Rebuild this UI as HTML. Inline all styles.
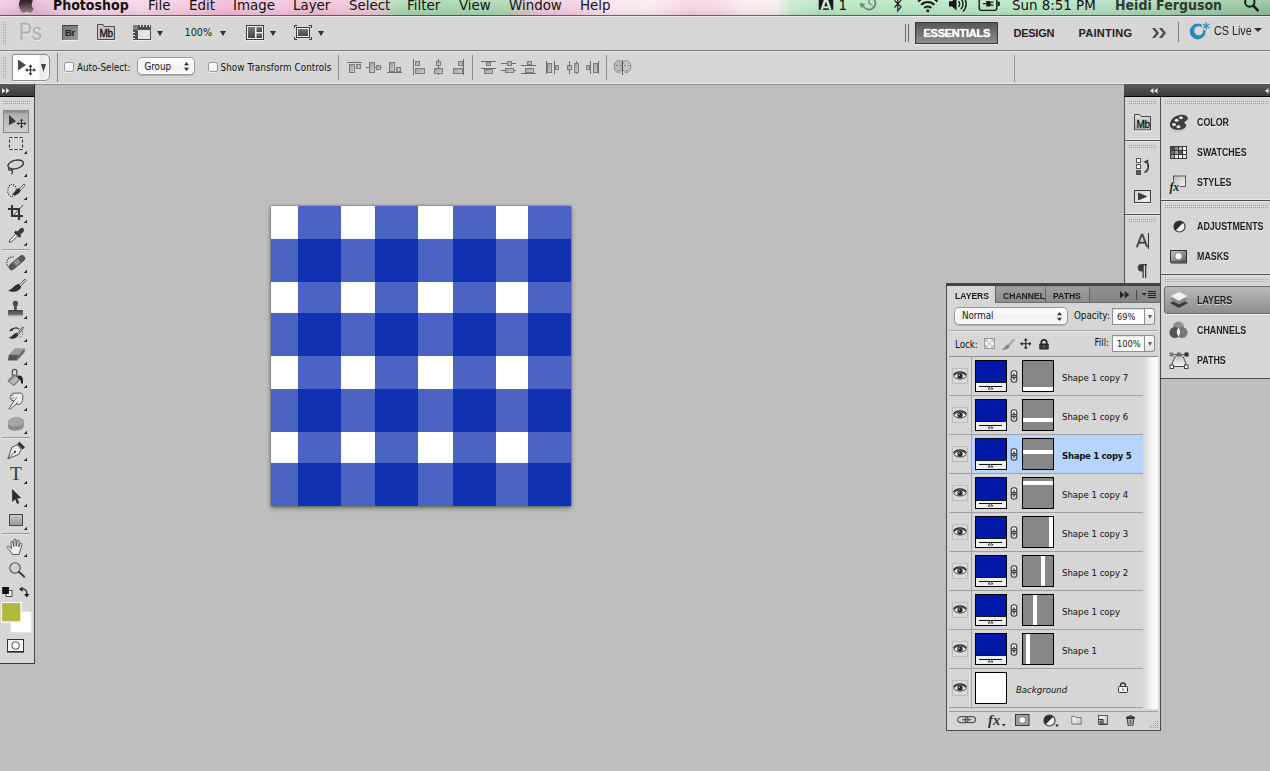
<!DOCTYPE html>
<html lang="en">
<head>
<meta charset="utf-8">
<title>Photoshop</title>
<style>
*{box-sizing:border-box;margin:0;padding:0}
html,body{width:1270px;height:771px;overflow:hidden;background:#bebebe}
body{position:relative;font-family:"Liberation Sans","DejaVu Sans",sans-serif;color:#111;font-size:10px}
.abs{position:absolute}
svg{position:absolute;overflow:visible}
/* ---------- mac menu bar ---------- */
#menubar{position:absolute;left:0;top:0;width:1270px;height:16px;overflow:hidden;
 background:linear-gradient(to right,#edcbdd 0,#e9c2d7 12px,#e1b1cb 30px,#e9c0d6 48px,#f3d3e3 72px,#f5d3e5 140px,#f3c6dc 190px,#f0b8d3 226px,#f4c9de 262px,#f0bcd5 300px,#f1c3d9 345px,#ecc7d6 378px,#bcd5b8 392px,#a6d6ae 404px,#a5d6ad 480px,#abd5b0 508px,#d4c7c5 524px,#efc5d9 540px,#f4cfe2 575px,#f9e4ee 610px,#fae9f1 650px,#f6d1e3 690px,#f7d5e5 715px,#fae8f0 745px,#f6eeea 776px,#c8e9cf 792px,#b7e6c2 815px,#b5e4c0 1000px,#afddba 1120px,#9dcba8 1210px,#90c09c 1270px);
 border-bottom:1px solid rgba(40,10,25,.62)}
#menubar:after{content:"";position:absolute;left:0;right:0;top:0;height:15px;background:linear-gradient(to bottom,rgba(255,255,255,.2),rgba(255,255,255,.04) 45%,rgba(0,0,0,.02) 70%,rgba(0,0,0,.07))}
#menubar span{position:absolute;top:-4px;font-family:"DejaVu Sans","Liberation Sans",sans-serif;font-size:13.4px;line-height:20px;color:#111;white-space:nowrap;z-index:2}
#menubar span.b{top:-5px;font-weight:bold;font-family:"DejaVu Sans Condensed","DejaVu Sans","Liberation Sans",sans-serif;font-size:14px}
/* ---------- application bar ---------- */
#appbar{position:absolute;left:0;top:16px;width:1270px;height:34px;background:#d6d6d6;box-shadow:inset 0 1px 0 #ebebeb}
#optbar{position:absolute;left:0;top:50px;width:1270px;height:35px;background:#d6d6d6;border-top:1px solid #7d7d7d;border-bottom:1px solid #8e8e8e;box-shadow:inset 0 -1px 0 #e9e9e9,inset 0 1px 0 #e4e4e4}
.lbl{position:absolute;white-space:nowrap;font-size:10px;line-height:12px;color:#111}
.ws{position:absolute;white-space:nowrap;font-weight:bold;font-size:11px;line-height:14px;color:#222;letter-spacing:-.25px}
.dj{font-family:"DejaVu Sans Condensed","DejaVu Sans","Liberation Sans",sans-serif;font-size:9.700px}
.pslogo{font-size:23px;line-height:26px;color:#b4b4b4;-webkit-text-stroke:.5px #b0b0b0;letter-spacing:-.3px;text-shadow:.7px 1px 0 #f4f4f4;transform:scaleX(.86);transform-origin:0 0}
.tri{position:absolute;display:block;width:0;height:0;border-style:solid;border-color:#2e2e2e transparent transparent transparent;border-width:5px 3.500px 0 3.500px}
.cb{position:absolute;width:10px;height:10px;background:linear-gradient(to bottom,#fff,#f1f1f1);border:1px solid #9b9b9b;border-radius:2px;box-shadow:0 1px 0 rgba(255,255,255,.6)}
.grip.v{}
.tab{position:absolute;white-space:nowrap;font-weight:bold;font-size:9.900px;line-height:12px;margin-top:.5px;color:#1c1c1c;transform:scaleX(.87);transform-origin:0 0}
.fld{position:absolute;width:33px;height:17px;background:#fff;border:1px solid #8f8f8f;box-shadow:inset 0 1px 1px rgba(0,0,0,.12)}
.fbtn{position:absolute;width:10px;height:17px;background:linear-gradient(to bottom,#fdfdfd,#e4e4e4);border:1px solid #8f8f8f;border-left:0;border-radius:0 3px 3px 0}
.fbtn:after{content:"";position:absolute;left:2.500px;top:6px;border-style:solid;border-width:4.500px 2.200px 0 2.200px;border-color:#5a5a5a transparent transparent transparent}
.lrow{position:absolute;left:3px;width:194px;height:39px;border-bottom:1px solid #a0a0a0}
.lrow.sel:before{content:"";position:absolute;left:23px;top:0;right:0;height:38px;background:#b5d5ff}
.lrow .th{position:absolute;left:26px;top:3px;width:32px;height:32px;border:1px solid #000;overflow:hidden}
.lrow .th.fill{background:linear-gradient(to bottom,#0018a8 0,#0018a8 21.500px,#1a1a1a 21.500px,#1a1a1a 22.500px,#efefef 22.500px)}
.lrow .th.fill .sl{position:absolute;left:3px;top:25px;width:23px;height:1px;background:#111}
.lrow .th.mask{left:73px;background:#868686}
.lrow .th.mask i{position:absolute;display:block;background:#fff}
.lrow .ln{position:absolute;left:113px;top:15px;white-space:nowrap;font-family:"DejaVu Sans Condensed","DejaVu Sans","Liberation Sans",sans-serif;font-size:9.500px;line-height:12px;color:#111}
.lrow.sel .ln{font-weight:bold;letter-spacing:-.28px}
.hline{height:2px;border-top:1px solid #4c4c4c;border-bottom:1px solid #e6e6e6;box-shadow:0 -1px 0 #e9e9e9}
.pl{position:absolute;left:73px;margin-top:.5px;white-space:nowrap;font-weight:bold;font-size:10.200px;line-height:12px;color:#1c1c1c;transform:scaleX(.87);transform-origin:0 0;text-shadow:0 1px 0 rgba(255,255,255,.55)}
/* ---------- canvas ---------- */
#doc{position:absolute;left:271px;top:206px;width:300px;height:300px;background:#fff;box-shadow:0 2px 5px rgba(0,0,0,.42),0 0 2px rgba(0,0,0,.45)}
#doc i{position:absolute;background:#4b63c3;display:block}
#doc b{position:absolute;width:43px;height:43px;background:#1032b1;display:block}
/* ---------- panels ---------- */
.grip{position:absolute;height:4px;background:conic-gradient(from 270deg,#a2a2a2 25%,rgba(0,0,0,0) 0) 0 0/2px 2px}
.dockhead{position:absolute;height:12px;background:linear-gradient(to bottom,#5a5a5a,#3c3c3c)}
</style>
</head>
<body>

<!-- MENU BAR -->
<div id="menubar">
<svg style="left:0;top:0;z-index:2" width="1270" height="15" viewBox="0 0 1270 15">
 <defs><linearGradient id="apg" x1="0" y1="0" x2="0" y2="1"><stop offset="0" stop-color="#2c1820"/><stop offset=".35" stop-color="#4a343c"/><stop offset="1" stop-color="#96848c"/></linearGradient></defs>
 <path d="M20.800 -1C19.300 1 18.600 3.500 18.900 5.500 19.300 8.500 20.800 11.500 22.400 12.600 23.300 13.200 24.300 13.100 25.200 12.700 26.300 12.200 27.500 12.200 28.600 12.700 29.600 13.200 30.600 13.100 31.400 12.300 32.500 11.200 33.300 9.800 33.800 8.600 32.400 8 31.600 6.600 31.700 5 31.800 3 32.500 1 33.200 -1Z" fill="url(#apg)"/>
 <path d="M23.500 13.600c1-.5 2-.5 3.400-1.100 1.200.5 2.400.7 3.400 1.100" stroke="#fff" stroke-opacity=".55" fill="none"/>
 <!-- adobe -->
 <rect x="818.700" y="-3" width="14.600" height="12.800" fill="#1a1a1a"/>
 <path d="M824.800 -3l-4.300 12.800h2.400L826 1.500l3.100 8.300h2.400L827.200 -3Z" fill="#cfeed8"/>
 <path d="M824.300 6.200h3.400l.8 2h-5Z" fill="#cfeed8"/>
 <!-- time machine -->
 <g stroke="#76867a" fill="none" stroke-width="1.800"><path d="M863 5.500A6.400 6.400 0 1 0 864.500 -1.500"/><path d="M869 -2V3.300l3.500 2" stroke-width="1.300"/></g>
 <path d="M859.300 3l6 .7-3.900 4.500Z" fill="#76867a"/>
 <!-- bluetooth -->
 <path d="M894.500 .3L901 6.800 897.800 10.800V-4L901 .3 894.500 7.500" fill="none" stroke="#1e1e1e" stroke-width="1.200"/>
 <!-- wifi -->
 <g fill="none" stroke="#161616" stroke-width="2"><path d="M918.200 1.600A13.300 13.300 0 0 1 937.400 1.600"/><path d="M921.200 4.900A9 9 0 0 1 934.400 4.900"/><path d="M924.300 8A4.800 4.800 0 0 1 931.300 8"/></g><circle cx="927.800" cy="10.700" r="1.500" fill="#161616"/>
 <!-- volume -->
 <path d="M949 1.300h3l4.500-4V10.500l-4.500-4h-3Z" fill="#161616"/>
 <g fill="none" stroke="#161616" stroke-width="1.400"><path d="M958.500 1.200a4 4 0 0 1 0 5.600"/><path d="M960.700 -1.300a7.300 7.300 0 0 1 0 10.600"/><path d="M963 -3.500a10.500 10.500 0 0 1 0 15"/></g>
 <!-- battery -->
 <rect x="979.200" y="-3" width="17.600" height="13.400" rx="2.300" fill="none" stroke="#1c1c1c" stroke-width="1.400"/><path d="M997.500 1.500h1.300a1 1 0 0 1 1 1v2.500a1 1 0 0 1-1 1h-1.300Z" fill="#1c1c1c"/>
 <path d="M983 3.700h3.500M990.500 2.200h3M990.500 5.200h3" stroke="#1c1c1c" stroke-width="1.200"/><path d="M986.300 1h3a1.500 1.500 0 0 1 1.500 1.500v2.400a1.500 1.500 0 0 1-1.500 1.500h-3Z" fill="#1c1c1c"/>
 <!-- spotlight -->
 <circle cx="1249.800" cy="2" r="4.700" fill="none" stroke="#1a1a1a" stroke-width="1.900"/><path d="M1253.200 5.600l4.600 4.800" stroke="#1a1a1a" stroke-width="2.400" stroke-linecap="round"/>
</svg>
 <span class="b" style="left:53px">Photoshop</span>
 <span style="left:148px">File</span>
 <span style="left:189px">Edit</span>
 <span style="left:233px">Image</span>
 <span style="left:293px">Layer</span>
 <span style="left:349px">Select</span>
 <span style="left:407px">Filter</span>
 <span style="left:459px">View</span>
 <span style="left:509px">Window</span>
 <span style="left:580px">Help</span>
 <span style="left:838.500px">1</span>
 <span style="left:1012px">Sun 8:51 PM</span>
 <span class="b" style="left:1115px;color:#303a33">Heidi Ferguson</span>
</div>

<!-- APPLICATION BAR -->
<div id="appbar">
 <div class="grip v" style="left:3px;top:6px;width:4px;height:24px"></div>
 <span class="abs pslogo" style="left:19px;top:3px">Ps</span>
 <!-- Br -->
 <div class="abs" style="left:62px;top:9px;width:16px;height:15px;background:linear-gradient(135deg,#747474,#9a9a9a);border-top:1px solid #3e3e3e;border-left:1px solid #5a5a5a;box-shadow:0 1px 0 #efefef"></div>
 <span class="abs" style="left:65px;top:11px;font-weight:bold;font-size:9.5px;line-height:11px;color:#222;letter-spacing:-.3px">Br</span>
 <!-- Mb -->
 <svg style="left:97px;top:8px" width="19" height="17" viewBox="0 0 19 17"><path d="M.5 15.5V.5H6l1 2H17.5V15.5Z" fill="#c6c6c6" stroke="#4a4a4a"/><path d="M0 16.5H18" stroke="#efefef"/></svg>
 <span class="abs" style="left:99.5px;top:12px;font-size:10px;line-height:11px;color:#111;letter-spacing:-.3px;-webkit-text-stroke:.3px #111">Mb</span>
 <!-- view extras -->
 <svg style="left:133px;top:9px" width="18" height="16" viewBox="0 0 18 16"><rect x="0" y="0" width="18" height="15" fill="#4e4e4e"/><rect x="5" y="5" width="12" height="9" fill="#e4e4e4"/><rect x="0" y="0" width="5" height="5" fill="#7c7c7c"/><path d="M7.5 0v2M10.5 0v2M13.5 0v2M16.5 0v2M0 7.500h2M0 10.500h2M0 13.500h2" stroke="#e8e8e8"/><path d="M0 15.500H18" stroke="#efefef"/></svg>
 <i class="tri" style="left:157px;top:15px"></i>
 <span class="lbl dj" style="left:184.500px;top:10px;font-size:10.800px;line-height:14px;color:#1a1a1a">100%</span>
 <i class="tri" style="left:220px;top:15px"></i>
 <!-- arrange -->
 <svg style="left:246px;top:9px" width="18" height="16" viewBox="0 0 18 16"><defs><linearGradient id="gd" x1="0" y1="0" x2="0" y2="1"><stop offset="0" stop-color="#777"/><stop offset="1" stop-color="#444"/></linearGradient></defs><rect x=".5" y=".5" width="17" height="14" fill="#f4f4f4" stroke="#3c3c3c"/><rect x="2" y="2" width="7" height="11" fill="url(#gd)"/><rect x="10.500" y="2" width="5.500" height="5" fill="url(#gd)"/><rect x="10.500" y="8.300" width="5.500" height="4.700" fill="url(#gd)"/><path d="M0 15.500H18" stroke="#efefef"/></svg>
 <i class="tri" style="left:270px;top:15px"></i>
 <!-- screen mode -->
 <svg style="left:294px;top:9px" width="18" height="16" viewBox="0 0 18 16"><path d="M.5 3V.5H3M15 .5h2.500V3M17.500 12v2.500H15M3 14.500H.5V12" fill="none" stroke="#333"/><rect x="2.500" y="2.500" width="13" height="10" fill="#f0f0f0" stroke="#3c3c3c"/><rect x="4" y="4" width="10" height="7" fill="url(#gd)"/></svg>
 <i class="tri" style="left:318px;top:15px"></i>

 <div class="abs" style="left:905px;top:8px;width:4px;height:18px;border-left:1px solid #6a6a6a;border-right:1px solid #6a6a6a"></div>
 <div class="abs" style="left:915px;top:6px;width:83px;height:22px;background:linear-gradient(to bottom,#575757,#8e8e8e);border:1px solid #3a3a3a;box-shadow:0 1px 0 #ececec"></div>
 <span class="ws" style="left:923.500px;top:10px;color:#fff;text-shadow:0 0 1px #fff">ESSENTIALS</span>
 <span class="ws" style="left:1013.500px;top:10px">DESIGN</span>
 <span class="ws" style="left:1078.500px;top:10px;letter-spacing:.25px">PAINTING</span>
 <svg style="left:1152px;top:12px" width="14" height="10" viewBox="0 0 14 10"><path d="M0 0h3l4 5-4 5H0l4-5ZM7 0h3l4 5-4 5H7l4-5Z" fill="#4c4c4c"/></svg>
 <div class="abs" style="left:1178px;top:6px;width:1px;height:20px;background:#7a7a7a"></div>
 <!-- CS Live -->
 <svg style="left:1189px;top:5px" width="22" height="19" viewBox="0 0 22 19"><circle cx="8.700" cy="10.500" r="7.900" fill="#2a8cb6"/><circle cx="9.700" cy="9.700" r="4.500" fill="#d9d9d9"/><circle cx="17.200" cy="5" r="4.600" fill="#d6d6d6"/><path d="M17.200 1.200v7.600M13.900 3.100l6.600 3.800M13.900 6.900l6.600-3.800" stroke="#2a8cb6" stroke-width="1.200"/></svg>
 <span class="lbl" style="left:1214px;top:8px;font-size:12.500px;line-height:14px;transform:scaleX(.86);transform-origin:0 0;color:#222">CS Live</span>
 <i class="tri" style="left:1254px;top:12px;border-width:4.500px 4px 0 4px"></i>
</div>

<!-- OPTIONS BAR -->
<div id="optbar">
 <div class="grip v" style="left:3px;top:6px;width:4px;height:22px"></div>
 <div class="abs" style="left:12px;top:3px;width:38px;height:27px;border:1px solid #8c8c8c;border-radius:1px 5px 5px 1px;background:linear-gradient(to right,#fff 0,#fff 26px,#e9e9e9 27px,#f2f2f2 36px);box-shadow:0 1px 0 #eee"></div>
 <svg style="left:17px;top:8px" width="19" height="17" viewBox="0 0 19 17"><path d="M1 .5V11.500L9 6Z" fill="#4a4a4a"/><path d="M13.500 6.500v9M9 11h9" stroke="#333" stroke-width="1.200"/><path d="M13.500 5.500l2 2.500h-4ZM13.500 16.500l2-2.500h-4ZM8 11l2.500-2v4ZM19 11l-2.500-2v4Z" fill="#333"/></svg>
 <svg style="left:41px;top:13px" width="5" height="8" viewBox="0 0 5 8"><path d="M0 0H5L2.500 8Z" fill="#444"/></svg>
 <div class="abs" style="left:57px;top:2px;width:1px;height:29px;background:#858585"></div>
 <div class="cb" style="left:64px;top:11px"></div>
 <span class="lbl dj" style="left:77px;top:10.500px">Auto-Select:</span>
 <div class="abs" style="left:137px;top:6px;width:58px;height:17.500px;border:1px solid #9a9a9a;border-radius:5px;background:linear-gradient(to bottom,#fff,#f3f3f3 60%,#fbfbfb);box-shadow:0 1px 1px rgba(0,0,0,.18)"></div>
 <span class="lbl dj" style="left:144.500px;top:9.500px">Group</span>
 <svg style="left:184px;top:11px" width="5" height="9" viewBox="0 0 5 9"><path d="M0 3.200L2.500 0 5 3.200ZM0 5.800L2.500 9 5 5.800Z" fill="#333"/></svg>
 <div class="cb" style="left:208px;top:11px"></div>
 <span class="lbl dj" style="left:220.500px;top:10.500px;letter-spacing:.12px">Show Transform Controls</span>
 <div class="abs" style="left:338px;top:4px;width:1px;height:25px;background:#8e8e8e"></div>
 <svg id="alignicons" style="left:0;top:-1px" width="640" height="36" viewBox="0 50 640 36"><defs><linearGradient id="gb" x1="0" y1="0" x2="1" y2="1"><stop offset="0" stop-color="#9a9a9a"/><stop offset="1" stop-color="#d2d2d2"/></linearGradient></defs><path d="M347 62.5H362" stroke="#6e6e6e"/><rect x="349.5" y="64.5" width="5" height="8" fill="url(#gb)" stroke="#7c7c7c"/><rect x="356.5" y="64.5" width="4" height="4" fill="url(#gb)" stroke="#7c7c7c"/><path d="M366 67.5H382" stroke="#6e6e6e"/><rect x="369.5" y="62.5" width="5" height="10" fill="url(#gb)" stroke="#7c7c7c"/><rect x="376.5" y="65.5" width="4" height="4" fill="url(#gb)" stroke="#7c7c7c"/><path d="M387 72.5H402" stroke="#6e6e6e"/><rect x="389.5" y="62.5" width="5" height="9" fill="url(#gb)" stroke="#7c7c7c"/><rect x="396.5" y="67.5" width="4" height="4" fill="url(#gb)" stroke="#7c7c7c"/><path d="M413.5 59V75" stroke="#6e6e6e"/><rect x="415.5" y="61.5" width="4" height="4" fill="url(#gb)" stroke="#7c7c7c"/><rect x="415.5" y="68.5" width="9" height="5" fill="url(#gb)" stroke="#7c7c7c"/><path d="M438.5 59V75" stroke="#6e6e6e"/><rect x="436.5" y="61.5" width="4" height="4" fill="url(#gb)" stroke="#7c7c7c"/><rect x="434.5" y="68.5" width="8" height="5" fill="url(#gb)" stroke="#7c7c7c"/><path d="M463.5 59V75" stroke="#6e6e6e"/><rect x="458.5" y="61.5" width="4" height="4" fill="url(#gb)" stroke="#7c7c7c"/><rect x="453.5" y="68.5" width="9" height="5" fill="url(#gb)" stroke="#7c7c7c"/><path d="M481 61.5H496" stroke="#6e6e6e"/><path d="M481 68.5H496" stroke="#6e6e6e"/><rect x="486.5" y="62.5" width="4" height="3" fill="url(#gb)" stroke="#7c7c7c"/><rect x="484.5" y="69.5" width="8" height="4" fill="url(#gb)" stroke="#7c7c7c"/><path d="M501 63.5H516" stroke="#6e6e6e"/><path d="M501 70.5H516" stroke="#6e6e6e"/><rect x="507.5" y="61.5" width="4" height="4" fill="url(#gb)" stroke="#7c7c7c"/><rect x="505.5" y="68.5" width="8" height="4" fill="url(#gb)" stroke="#7c7c7c"/><path d="M521 65.5H536" stroke="#6e6e6e"/><path d="M521 73.5H536" stroke="#6e6e6e"/><rect x="527.5" y="61.5" width="4" height="3" fill="url(#gb)" stroke="#7c7c7c"/><rect x="525.5" y="68.5" width="8" height="4" fill="url(#gb)" stroke="#7c7c7c"/><path d="M546.5 61V74" stroke="#6e6e6e"/><path d="M554.5 61V74" stroke="#6e6e6e"/><rect x="547.5" y="63.5" width="4" height="9" fill="url(#gb)" stroke="#7c7c7c"/><rect x="555.5" y="65.5" width="3" height="4" fill="url(#gb)" stroke="#7c7c7c"/><path d="M569.5 61V74" stroke="#6e6e6e"/><path d="M576.5 61V74" stroke="#6e6e6e"/><rect x="567.5" y="65.5" width="4" height="4" fill="url(#gb)" stroke="#7c7c7c"/><rect x="574.5" y="63.5" width="4" height="9" fill="url(#gb)" stroke="#7c7c7c"/><path d="M590.5 61V74" stroke="#6e6e6e"/><path d="M598.5 61V74" stroke="#6e6e6e"/><rect x="586.5" y="65.5" width="3" height="4" fill="url(#gb)" stroke="#7c7c7c"/><rect x="593.5" y="63.5" width="4" height="9" fill="url(#gb)" stroke="#7c7c7c"/><ellipse cx="618.500" cy="66.500" rx="4.300" ry="6" fill="#b9b9b9" stroke="#8a8a8a"/><ellipse cx="626.500" cy="66.500" rx="4.300" ry="6" fill="#c4c4c4" stroke="#8a8a8a"/><path d="M622.500 60V75" stroke="#555"/><path d="M616 65.500h2M620 65.500h1.500M624 65.500h2M628 65.500h1.500M618 70.500h1.500M626 70.500h1.500" stroke="#7a7a7a"/></svg>
 <div class="abs" style="left:472px;top:4px;width:1px;height:25px;background:#8e8e8e"></div>
 <div class="abs" style="left:606px;top:4px;width:1px;height:25px;background:#8e8e8e"></div>
 <div class="abs" style="left:1014px;top:4px;width:1px;height:27px;background:#9a9a9a"></div>
</div>

<!-- CANVAS -->
<div id="doc">
 <i style="left:27px;top:0;width:43px;height:300px"></i>
 <i style="left:104px;top:0;width:43px;height:300px"></i>
 <i style="left:182px;top:0;width:43px;height:300px"></i>
 <i style="left:257px;top:0;width:43px;height:300px"></i>
 <i style="left:0;top:33px;width:300px;height:43px"></i>
 <i style="left:0;top:107px;width:300px;height:43px"></i>
 <i style="left:0;top:183px;width:300px;height:43px"></i>
 <i style="left:0;top:257px;width:300px;height:43px"></i>
 <b style="left:27px;top:33px"></b> <b style="left:104px;top:33px"></b> <b style="left:182px;top:33px"></b> <b style="left:257px;top:33px"></b>
 <b style="left:27px;top:107px"></b> <b style="left:104px;top:107px"></b> <b style="left:182px;top:107px"></b> <b style="left:257px;top:107px"></b>
 <b style="left:27px;top:183px"></b> <b style="left:104px;top:183px"></b> <b style="left:182px;top:183px"></b> <b style="left:257px;top:183px"></b>
 <b style="left:27px;top:257px"></b> <b style="left:104px;top:257px"></b> <b style="left:182px;top:257px"></b> <b style="left:257px;top:257px"></b>
</div>

<!-- TOOLBOX -->
<div id="tools" class="abs" style="left:0;top:84px;width:36px;height:580px">
 <div class="abs" style="left:0;top:0;width:35px;height:580px;background:#d6d6d6;border-right:1px solid #4a4a4a;border-bottom:1px solid #3a3a3a"></div>
 <div class="abs" style="left:0;top:0;width:35px;height:13px;background:linear-gradient(to bottom,#5a5a5a,#3c3c3c 91%,#000 92%);border-right:1px solid #2a2a2a"></div>
 <svg style="left:2px;top:4px" width="8" height="6" viewBox="0 0 8 6"><path d="M0 0l3.500 2.700L0 5.400ZM4 0l3.500 2.700L4 5.400Z" fill="#e4e4e4"/></svg>
 <div class="grip" style="left:3px;top:17px;width:28px;height:4px"></div>
 <svg style="left:0;top:0" width="36" height="580" viewBox="0 84 36 580"><defs>
<linearGradient id="tg1" x1="0" y1="0" x2="0" y2="1"><stop offset="0" stop-color="#8a8a8a"/><stop offset=".12" stop-color="#9c9c9c"/><stop offset=".15" stop-color="#adadad"/><stop offset="1" stop-color="#d2d2d2"/></linearGradient>
<linearGradient id="tg2" x1="0" y1="0" x2="0" y2="1"><stop offset="0" stop-color="#c9c9c9"/><stop offset="1" stop-color="#969696"/></linearGradient>
<linearGradient id="tg3" x1="0" y1="0" x2="0" y2="1"><stop offset="0" stop-color="#444"/><stop offset="1" stop-color="#7a7a7a"/></linearGradient>
<linearGradient id="tg4" x1="0" y1="0" x2="1" y2="1"><stop offset="0" stop-color="#505050"/><stop offset=".55" stop-color="#c0c0c0"/><stop offset="1" stop-color="#6a6a6a"/></linearGradient>
<filter id="nz" x="0" y="0" width="1" height="1"><feTurbulence type="fractalNoise" baseFrequency=".8" numOctaves="2" seed="4" result="t"/><feColorMatrix in="t" type="matrix" values="0 0 0 0 .25  0 0 0 0 .25  0 0 0 0 .25  2.500 0 0 0 -.9" result="n"/><feComposite in="n" in2="SourceGraphic" operator="in"/></filter><pattern id="spg" width="3" height="3" patternUnits="userSpaceOnUse"><rect width="3" height="3" fill="#9c9c9c"/><rect x="0" y="0" width="1" height="1" fill="#d6d6d6"/><rect x="2" y="1" width="1" height="1" fill="#6e6e6e"/><rect x="1" y="2" width="1" height="1" fill="#c4c4c4"/></pattern>
</defs><rect x="3.500" y="110.500" width="25" height="22" fill="url(#tg1)" stroke="#868686"/><path d="M9 115V125.300L16 121.300Z" fill="#383838"/><path d="M21.500 119.800v7.400M17.800 123.500h7.400" stroke="#333" stroke-width="1.100"/><path d="M21.500 118.700l1.800 2.100h-3.600ZM21.500 128.300l1.800-2.100h-3.600ZM16.700 123.500l2.100-1.800v3.600ZM26.300 123.500l-2.100-1.800v3.600Z" fill="#333"/><rect x="9.500" y="137.500" width="13" height="12" fill="none" stroke="#2e2e2e" stroke-width="1.100" stroke-dasharray="3 2"/><path d="M27 150.8V154H23.800Z" fill="#1e1e1e"/><ellipse cx="15.700" cy="164.500" rx="7.900" ry="4.200" transform="rotate(-14 15.700 164.500)" fill="none" stroke="#3a3a3a" stroke-width="1.400"/><path d="M9 168.200c-1.500 1.600 1.200 2.600 2.600 1.800 1.200 1 1.300 2.800-.2 4.200" fill="none" stroke="#3a3a3a" stroke-width="1.300"/><path d="M27 173.8V177H23.800Z" fill="#1e1e1e"/><ellipse cx="12.100" cy="190.500" rx="4.300" ry="6.100" fill="none" stroke="#222" stroke-width="1.200" stroke-dasharray="1 1.300"/><path d="M11.300 194.300C13.800 193.800 15.200 190.200 18.600 188L20.900 190.100C19.800 193.800 15.500 196.500 11.300 194.300Z" fill="#303030"/><path d="M19.300 188.600l4.700-4.600 1.300 1.300-4.600 4.700" fill="#e6e6e6" stroke="#4a4a4a" stroke-width=".9"/><path d="M27 196.8V200H23.800Z" fill="#1e1e1e"/><path d="M12 205v11h11M8 209h11v11" fill="none" stroke="#333" stroke-width="2.100"/><path d="M13 216L23 205" stroke="#333" stroke-width=".9"/><path d="M27 219.8V223H23.800Z" fill="#1e1e1e"/><path d="M9.300 242.300l.6-2.300 6-6.300 2 2-6.300 6Z" fill="#f4f4f4" stroke="#3a3a3a" stroke-width=".9"/><path d="M15 231.500l5.300 5.300" stroke="#2a2a2a" stroke-width="2.600"/><path d="M18.600 233.400l3.300-3.300" stroke="#3c3c3c" stroke-width="4.400" stroke-linecap="round"/><path d="M27 242.60000000000002V245.8H23.800Z" fill="#1e1e1e"/><path d="M2 249.500H30" stroke="#9a9a9a"/><path d="M2 250.500H30" stroke="#e6e6e6"/><path d="M13.500 257.300a5.200 5.800 0 0 0-5.300 9.500" fill="none" stroke="#222" stroke-width="1.200" stroke-dasharray="1 1.300"/><rect x="7.400" y="259.700" width="19" height="5.800" rx="2.900" transform="rotate(-40 16.900 262.600)" fill="#585858" stroke="#454545" stroke-width=".6"/><path d="M14.400 264.600l5-4.200" stroke="#828282" stroke-width="4.600"/><path d="M15.500 262l.01 0M17.300 260.500l.01 0M16.700 263.700l.01 0M18.600 262.200l.01 0" stroke="#dedede" stroke-width="1.100" stroke-linecap="round"/><path d="M27 269.8V273H23.800Z" fill="#1e1e1e"/><path d="M7.900 290.600C11.500 290 13.500 285.800 18.600 283.800L21.300 286.400C20 290.800 13.800 293.400 7.900 290.600Z" fill="#303030"/><path d="M19.300 284.700l5.500-5.500 1.300 1.200-5.400 5.700" fill="#dcdcdc" stroke="#444" stroke-width=".9"/><path d="M27 292.8V296H23.800Z" fill="#1e1e1e"/><circle cx="15.400" cy="303.400" r="2.600" fill="#4a4a4a"/><rect x="14" y="304.500" width="2.800" height="6" fill="#4f4f4f"/><rect x="8" y="310" width="15" height="5.500" rx=".8" fill="url(#tg3)"/><path d="M8 316.300H23" stroke="#bdbdbd"/><path d="M27 315.8V319H23.800Z" fill="#1e1e1e"/><path d="M8.300 337.800C11.300 337.300 12.800 334.200 16.300 332.700L18.500 334.800C17.400 338.200 12.800 340 8.300 337.800Z" fill="#303030"/><path d="M17 334l5.600-7.300 1.100.9-5.400 7.500" fill="#dcdcdc" stroke="#444" stroke-width=".9"/><path d="M11.300 330.300c2.300-2.600 5.300-2.900 7.700-1.300" fill="none" stroke="#333" stroke-width="1.400"/><path d="M9 331.500l4-1-1.200-2.800Z" fill="#333"/><path d="M22.500 331.500c.6 2.600-.6 4.900-3.300 6.300" fill="none" stroke="#444" stroke-width="1" stroke-dasharray="1 1.400"/><path d="M27 338.8V342H23.800Z" fill="#1e1e1e"/><path d="M15 348.200h9.800l-6.600 6.500H8.900Z" fill="#9b9b9b"/><path d="M8.900 354.700h9.300l-.9 5.800H7.900Z" fill="#555"/><path d="M24.800 348.200v3.800l-7.500 8.500.9-5.800Z" fill="#6d6d6d"/><path d="M27 361.8V365H23.800Z" fill="#1e1e1e"/><path d="M7.900 380.800l6.100-6.300 6.100 4.500-6.100 6.500Z" fill="url(#tg4)" stroke="#444" stroke-width=".7"/><path d="M12.300 375.500v-4c0-3 4.500-3 4.500 0v5.500" fill="none" stroke="#3c3c3c" stroke-width="1.100"/><path d="M17.800 375.800c4.200-1.200 5.700 2.700 5.200 7.800h-1.900c0-3-.7-5-3.300-5.200Z" fill="#262626"/><path d="M27 384.8V388H23.800Z" fill="#1e1e1e"/><path d="M8.900 408.700L14.200 400.700C12.600 400.900 11 400.300 10.600 398.900 10 397.900 10 396.500 10.700 395.600 10.900 394.300 12.300 393.400 14 393.200L20 393C21.800 393 22.900 394.300 22.900 396L22.500 400.500C22.200 402.800 20.500 404.300 18.500 404.300L16 404.200 10.700 408.900Z" fill="#ededed" stroke="#4a4a4a" stroke-width=".9" stroke-linejoin="round"/><path d="M14.200 400.700l2.700-3.400M10.700 395.600c1.300.3 2.300-.2 3-1M10.600 398.900c1.400.1 2.600-.5 3.300-1.600M16 404.200l2-2.700" fill="none" stroke="#555" stroke-width=".8"/><path d="M27 407.8V411H23.800Z" fill="#1e1e1e"/><path d="M8 422.500c0-3 4-5.200 8.500-5.200s7.300 1.700 7.300 4v4.300c0 3-4 5.200-8.500 5.200S8 429.300 8 426.800Z" fill="#8e8e8e"/><path d="M8 422.500c0-3 4-5.200 8.500-5.200s7.300 1.700 7.300 4c0 3-4 5.200-8.500 5.200S8 425 8 422.500Z" fill="#b4b4b4"/><path d="M8 422.500c0-3 4-5.200 8.500-5.200s7.300 1.700 7.300 4v4.300c0 3-4 5.200-8.500 5.200S8 429.300 8 426.800Z" fill="#fff" filter="url(#nz)" opacity=".85"/><path d="M27 430.8V434H23.800Z" fill="#1e1e1e"/><path d="M2 437.500H30" stroke="#9a9a9a"/><path d="M2 438.500H30" stroke="#e6e6e6"/><path d="M7.900 458.800l4-11.500 5.300-2.500 4 4.300-2.500 5.300Z" fill="#ededed" stroke="#444" stroke-width=".9"/><path d="M7.900 458.800l6.500-6.500" stroke="#444" stroke-width=".8"/><circle cx="15" cy="451.800" r="1.100" fill="#222"/><path d="M18.300 442.800l5.500 5.600" stroke="#333" stroke-width="3.200"/><path d="M27 457.8V461H23.800Z" fill="#1e1e1e"/><text x="15.900" y="480" text-anchor="middle" font-family="Liberation Serif,serif" font-size="19.500" fill="#3a3a3a">T</text><path d="M27 480.8V484H23.800Z" fill="#1e1e1e"/><path d="M12.100 489.100v12.800l3-2.700 2 4.800 2.200-.9-2-4.700 3.900-.3Z" fill="#2e2e2e"/><path d="M27 503.8V507H23.800Z" fill="#1e1e1e"/><rect x="9.500" y="514.500" width="13" height="11" fill="url(#tg2)" stroke="#444"/><path d="M27 526.8V530H23.800Z" fill="#1e1e1e"/><path d="M2 533.500H30" stroke="#9a9a9a"/><path d="M2 534.500H30" stroke="#e6e6e6"/><path d="M12.500 554.500c-1.300-2.600-3.200-4.700-5.100-6.600-.8-1 .5-2.100 1.500-1.400l2.600 2.300-.6-6.300c-.1-1.400 1.700-1.600 2-.3l.9 4.300v-6.300c0-1.400 2-1.400 2.100 0l.3 6 1-5.300c.3-1.300 2.100-1 2 .3l-.6 5.800 1.600-3.300c.6-1.100 2.200-.4 1.800.8-1 2.700-1.600 6.300-3 10Z" fill="#efefef" stroke="#444" stroke-width=".9" stroke-linejoin="round"/><path d="M27 553.8V557H23.800Z" fill="#1e1e1e"/><circle cx="15" cy="568" r="5.200" fill="#d2d2d2" stroke="#4a4a4a" stroke-width="1.100"/><path d="M19 572l5.300 4.700" stroke="#3a3a3a" stroke-width="1.900" stroke-linecap="round"/><rect x="6" y="590.500" width="6" height="6" fill="#fff" stroke="#222" stroke-width=".8"/><rect x="2.200" y="587" width="6.800" height="7" fill="#111"/><path d="M21.500 589c4-.8 5.500 2 5.300 5.500" fill="none" stroke="#222" stroke-width="1.300"/><path d="M19 589.200l3.600-2.700v5.200ZM26.800 597.400l-2.800-3.400h5.400Z" fill="#222"/><rect x="10.500" y="611.500" width="21" height="21" fill="#fff" stroke="#e2e2e2"/><rect x="1" y="602" width="20.800" height="20.800" fill="#fafafa"/><rect x="2.100" y="603.100" width="18.200" height="18.200" fill="#b0ba3c"/><rect x="7.500" y="639.500" width="16" height="12" fill="#f6f6f6" stroke="#333"/><path d="M7 652H24" stroke="#222" stroke-width="1.200"/><circle cx="15.600" cy="645.500" r="3.800" fill="#fff" stroke="#333" stroke-width=".9"/></svg>
</div>

<!-- RIGHT DOCK -->
<div id="dock" class="abs" style="left:1124px;top:85px;width:146px;height:300px">
 <!-- header -->
 <div class="abs" style="left:0;top:-1px;width:146px;height:13px;background:linear-gradient(to bottom,#5a5a5a,#3c3c3c 91%,#000 92%)"></div>
 <svg style="left:26px;top:3px" width="8" height="6" viewBox="0 0 8 6"><path d="M3.500 0L0 2.700l3.500 2.700ZM7.500 0L4 2.700l3.500 2.700Z" fill="#e4e4e4"/></svg>
 <svg style="left:141px;top:3px" width="8" height="6" viewBox="0 0 8 6"><path d="M3.500 0L0 2.700l3.500 2.700ZM7.500 0L4 2.700l3.500 2.700Z" fill="#e4e4e4"/></svg>
 <!-- icon column -->
 <div class="abs" style="left:0;top:12px;width:37px;height:186px;background:#d6d6d6;border-left:1px solid #4c4c4c;border-right:1px solid #4c4c4c"></div>
 <div class="grip" style="left:5px;top:16px;width:28px"></div>
 <div class="abs hline" style="left:1px;top:55px;width:35px"></div>
 <div class="grip" style="left:5px;top:60px;width:28px"></div>
 <div class="abs hline" style="left:1px;top:129px;width:35px"></div>
 <div class="grip" style="left:5px;top:134px;width:28px"></div>
 <!-- Mb -->
 <svg style="left:10px;top:29px" width="18" height="18" viewBox="0 0 18 18"><defs><linearGradient id="mbg" x1="0" y1="0" x2="0" y2="1"><stop offset="0" stop-color="#e4e4e4"/><stop offset="1" stop-color="#a9a9a9"/></linearGradient></defs><path d="M.5 16V.5H5.500l1.500 2H16.500V16Z" fill="url(#mbg)" stroke="#444"/><path d="M1 17H17" stroke="#f0f0f0"/></svg>
 <span class="abs" style="left:12.500px;top:34px;font-size:10px;line-height:11px;color:#111;letter-spacing:-.3px;-webkit-text-stroke:.3px #111;text-shadow:0 1px 0 rgba(255,255,255,.6)">Mb</span>
 <!-- history -->
 <svg style="left:12px;top:73px" width="15" height="17" viewBox="0 0 15 17"><rect x=".5" y=".5" width="4" height="4" fill="#fff" stroke="#555"/><rect x=".5" y="6.500" width="4" height="4" fill="#fff" stroke="#555"/><rect x="0" y="12" width="5" height="5" fill="#555"/><path d="M8.500 14.500c4.500-2 5-7.500 1.800-11.500" fill="none" stroke="#3a3a3a" stroke-width="1.700"/><path d="M7.300 3.800l5.200-2.300-.8 4.500Z" fill="#3a3a3a"/></svg>
 <!-- actions -->
 <svg style="left:10px;top:105px" width="18" height="14" viewBox="0 0 18 14"><defs><linearGradient id="acg" x1="0" y1="0" x2="1" y2="1"><stop offset="0" stop-color="#cfcfcf"/><stop offset="1" stop-color="#f4f4f4"/></linearGradient></defs><rect x=".5" y=".5" width="16" height="12" fill="url(#acg)" stroke="#3c3c3c"/><path d="M4 2.500v8l9.500-4Z" fill="#3c3c3c"/><path d="M1 13.500H17" stroke="#f0f0f0"/></svg>
 <!-- character -->
 <span class="abs" style="left:11.500px;top:145px;font-size:19px;line-height:22px;color:#444;-webkit-text-stroke:.35px #444;transform:scaleX(.95);transform-origin:0 0">A</span>
 <div class="abs" style="left:24px;top:148px;width:1px;height:16px;background:#333"></div>
 <!-- paragraph -->
 <svg style="left:13px;top:179px" width="10" height="14" viewBox="0 0 10 14"><path d="M4.500 0H10V1.200H9.300V14H8V1.200H6.800V14H5.500V7.500H4.500A3.750 3.750 0 0 1 4.500 0Z" fill="#3c3c3c"/></svg>

 <!-- right column -->
 <div class="abs" style="left:37px;top:12px;width:109px;height:282px;background:#d6d6d6;border-bottom:1px solid #4c4c4c"></div>
 <div class="grip" style="left:41px;top:16px;width:104px"></div>
 <div class="abs hline" style="left:37px;top:115px;width:109px"></div>
 <div class="grip" style="left:41px;top:120px;width:104px"></div>
 <div class="abs hline" style="left:37px;top:189px;width:109px"></div>
 <div class="grip" style="left:41px;top:194px;width:104px"></div>
 <!-- selected LAYERS button -->
 <div class="abs" style="left:40px;top:201px;width:112px;height:28px;border:1px solid #6a6a6a;border-radius:3px;background:linear-gradient(to bottom,#b9b9b9,#8d8d8d);box-shadow:0 1px 0 #f0f0f0"></div>

 <span class="pl" style="top:31px">COLOR</span>
 <span class="pl" style="top:61px">SWATCHES</span>
 <span class="pl" style="top:91px">STYLES</span>
 <span class="pl" style="top:135px">ADJUSTMENTS</span>
 <span class="pl" style="top:165px">MASKS</span>
 <span class="pl" style="top:209px">LAYERS</span>
 <span class="pl" style="top:239px">CHANNELS</span>
 <span class="pl" style="top:269px">PATHS</span>

 <!-- COLOR palette -->
 <svg style="left:45px;top:29px" width="20" height="17" viewBox="0 0 20 17"><path d="M10.500 1C15.500 .2 19.300 2.200 18.800 5c-.4 2-3 1.800-3.400 3.300-.4 1.600 2.800 1.700 1.600 4.200C15.800 15 11.500 16.300 7 15.800 2.800 15.300.3 12.800 1 9.500 1.800 5.300 5.500 1.800 10.500 1Z" fill="#3e3e3e"/><ellipse cx="5" cy="10.500" rx="1.900" ry="1.500" fill="#f4f4f4"/><ellipse cx="7.600" cy="6.300" rx="1.900" ry="1.500" fill="#f4f4f4"/><ellipse cx="12" cy="3.800" rx="1.900" ry="1.400" fill="#f4f4f4"/><ellipse cx="9.500" cy="12.800" rx="2" ry="1.500" fill="#f4f4f4"/><path d="M2 16.500C6 18 13 17.500 17 14.500" stroke="#bdbdbd" fill="none"/></svg>
 <!-- SWATCHES -->
 <svg style="left:46px;top:61px" width="17" height="13" viewBox="0 0 17 13"><rect width="17" height="13" fill="#3a3a3a"/><g><rect x="1" y="1" width="3" height="3" fill="#4f4f4f"/><rect x="5" y="1" width="3" height="3" fill="#8c8c8c"/><rect x="9" y="1" width="3" height="3" fill="#b8b8b8"/><rect x="13" y="1" width="3" height="3" fill="#fff"/><rect x="1" y="5" width="3" height="3" fill="#6d6d6d"/><rect x="5" y="5" width="3" height="3" fill="#a2a2a2"/><rect x="9" y="5" width="3" height="3" fill="#5c5c5c"/><rect x="13" y="5" width="3" height="3" fill="#fff"/><rect x="1" y="9" width="3" height="3" fill="#9a9a9a"/><rect x="5" y="9" width="3" height="3" fill="#f0f0f0"/><rect x="9" y="9" width="3" height="3" fill="#fff"/><rect x="13" y="9" width="3" height="3" fill="#e8e8e8"/></g></svg>
 <!-- STYLES -->
 <svg style="left:45px;top:90px" width="18" height="17" viewBox="0 0 18 17"><defs><linearGradient id="stg" x1="0" y1="0" x2="1" y2="1"><stop offset="0" stop-color="#b9b9b9"/><stop offset="1" stop-color="#f6f6f6"/></linearGradient></defs><rect x="4.500" y="1" width="12" height="10.500" fill="url(#stg)" stroke="#4a4a4a" stroke-width=".9"/><rect x="3" y="6.500" width="8" height="7" fill="#d6d6d6"/></svg>
 <span class="abs" style="left:45.500px;top:95px;font-family:'Liberation Serif',serif;font-style:italic;font-weight:bold;font-size:12px;line-height:14px;color:#1e1e1e;letter-spacing:-.2px">fx</span>
 <!-- ADJUSTMENTS -->
 <svg style="left:49px;top:135px" width="13" height="13" viewBox="0 0 13 13"><circle cx="6.500" cy="6.500" r="5.500" fill="#f6f6f6" stroke="#3a3a3a" stroke-width="1.200"/><path d="M2.600 10.400A5.500 5.500 0 0 1 10.400 2.600Z" fill="#2e2e2e"/></svg>
 <!-- MASKS -->
 <svg style="left:46px;top:165px" width="18" height="14" viewBox="0 0 18 14"><defs><linearGradient id="mkg" x1="0" y1="0" x2="1" y2="1"><stop offset="0" stop-color="#c8c8c8"/><stop offset="1" stop-color="#5a5a5a"/></linearGradient></defs><rect x=".5" y=".5" width="16" height="11.500" fill="url(#mkg)" stroke="#2e2e2e"/><circle cx="8.500" cy="6.200" r="3.600" fill="#fff" stroke="#444" stroke-width=".5"/><path d="M1 13H17" stroke="#2e2e2e"/></svg>
 <!-- LAYERS icon -->
 <svg style="left:45px;top:206px" width="20" height="18" viewBox="0 0 20 18"><path d="M10 7.500l9 4.500-9 5-9-5Z" fill="#3a3a3a"/><path d="M10 4l9 4.500-9 5-9-5Z" fill="#8a8a8a"/><path d="M10 .5l9 4.500-9 5-9-5Z" fill="#f0f0f0" stroke="#9a9a9a" stroke-width=".5"/></svg>
 <!-- CHANNELS icon -->
 <svg style="left:45px;top:236px" width="19" height="18" viewBox="0 0 19 18"><circle cx="9.500" cy="6" r="5.500" fill="#8e8e8e"/><circle cx="6" cy="11.500" r="5.500" fill="#4a4a4a" fill-opacity=".92"/><circle cx="13" cy="11.500" r="5.500" fill="#6e6e6e" fill-opacity=".9"/><path d="M9.500 7c2 1.300 2.200 5.500 0 8.500-2.200-3-2-7.200 0-8.500Z" fill="#f4f4f4"/></svg>
 <!-- PATHS icon -->
 <svg style="left:45px;top:267px" width="20" height="17" viewBox="0 0 20 17"><defs><linearGradient id="ptg" x1="0" y1="0" x2="0" y2="1"><stop offset="0" stop-color="#bdbdbd"/><stop offset="1" stop-color="#f2f2f2"/></linearGradient></defs><path d="M2.500 14.500C4 8 6 2.500 10 2.500s6 5.500 7.500 12Z" fill="url(#ptg)" stroke="#333" stroke-width=".9"/><path d="M3 2.500H17" stroke="#555" stroke-width=".9"/><rect x=".5" y=".5" width="4" height="4" fill="#7a7a7a"/><rect x="8" y=".5" width="4" height="4" fill="#6a6a6a"/><rect x="15.500" y=".5" width="4" height="4" fill="#2a2a2a"/><rect x="1" y="13" width="3.500" height="3.500" fill="#fff" stroke="#333" stroke-width=".9"/><rect x="15.500" y="13" width="3.500" height="3.500" fill="#fff" stroke="#333" stroke-width=".9"/></svg>
</div>

<!-- LAYERS PANEL -->
<div id="layers" class="abs" style="left:946px;top:283px;width:215px;height:448px">
 <div class="abs" style="left:0;top:0;width:215px;height:448px;background:#d6d6d6;border:1px solid #4a4a4a;border-top:3px solid #444"></div>
 <!-- tab bar -->
 <div class="abs" style="left:1px;top:3px;width:213px;height:17px;background:linear-gradient(to bottom,#8f8f8f,#858585);border-bottom:1px solid #6e6e6e"></div>
 <div class="abs" style="left:1px;top:3px;width:49px;height:17px;background:#d6d6d6;border-right:1px solid #5e5e5e"></div>
 <div class="abs" style="left:50px;top:4px;width:50px;height:16px;background:linear-gradient(to bottom,#a0a0a0,#8c8c8c);border-right:1px solid #666;border-bottom:1px solid #6e6e6e;overflow:hidden"><span class="tab" style="left:6.500px;top:2px">CHANNELS</span></div>
 <div class="abs" style="left:100px;top:4px;width:44px;height:16px;background:linear-gradient(to bottom,#a0a0a0,#8c8c8c);border-right:1px solid #666;border-bottom:1px solid #6e6e6e;overflow:hidden"><span class="tab" style="left:6.500px;top:2px">PATHS</span></div>
 <span class="tab" style="left:8.500px;top:6px">LAYERS</span>
 <svg style="left:174px;top:8px" width="9.500" height="7.500" viewBox="0 0 9.500 7.500"><path d="M0 0l4.500 3.750L0 7.500ZM4.800 0l4.500 3.750-4.500 3.750Z" fill="#262626"/></svg>
 <div class="abs" style="left:190px;top:7px;width:1px;height:10px;background:#4a4a4a"></div>
 <svg style="left:196px;top:8px" width="14" height="8" viewBox="0 0 14 8"><path d="M0 2h4.500L2.250 4.800Z" fill="#222"/><path d="M6 .5h8M6 2.500h8M6 4.500h8M6 6.500h8" stroke="#222" stroke-width="1"/></svg>

 <!-- blend + opacity -->
 <div class="abs" style="left:8px;top:24px;width:114px;height:18px;border:1px solid #9a9a9a;border-radius:5px;background:linear-gradient(to bottom,#fff,#f1f1f1 60%,#fbfbfb);box-shadow:0 1px 1px rgba(0,0,0,.18)"></div>
 <span class="lbl dj" style="left:16px;top:27px">Normal</span>
 <svg style="left:111px;top:29px" width="5" height="9" viewBox="0 0 5 9"><path d="M0 3.200L2.500 0 5 3.200ZM0 5.800L2.500 9 5 5.800Z" fill="#333"/></svg>
 <span class="lbl dj" style="left:128px;top:27px">Opacity:</span>
 <div class="fld" style="left:166px;top:25px"></div><div class="fbtn" style="left:199px;top:25px"></div>
 <span class="lbl dj" style="left:171px;top:28px;font-size:9.200px">69%</span>
 <div class="abs" style="left:3px;top:47px;width:209px;height:2px;border-top:1px solid #a6a6a6;border-bottom:1px solid #e9e9e9"></div>
 <!-- lock row -->
 <span class="lbl dj" style="left:9px;top:56px">Lock:</span>
 <svg style="left:38px;top:55px" width="12" height="12" viewBox="0 0 12 12"><rect x=".5" y=".5" width="10" height="10" fill="#f4f4f4" stroke="#9a9a9a"/><rect x="1" y="1" width="3" height="3" fill="#c9c9c9"/><rect x="7" y="1" width="3" height="3" fill="#c9c9c9"/><rect x="4" y="4" width="3" height="3" fill="#c9c9c9"/><rect x="1" y="7" width="3" height="3" fill="#c9c9c9"/><rect x="7" y="7" width="3" height="3" fill="#c9c9c9"/></svg>
 <svg style="left:55px;top:55px" width="14" height="12" viewBox="0 0 14 12"><path d="M.3 11.300C3 10.800 4 7.800 7 6.300L8.800 8C7.800 11 4 12.800.3 11.300Z" fill="#858585"/><path d="M7.400 6.600L12.600 1l1 .9-5.100 5.800" fill="#c4c4c4" stroke="#8a8a8a" stroke-width=".8"/></svg>
 <svg style="left:74px;top:55px" width="11.500" height="11.500" viewBox="0 0 13 13"><path d="M6.500 2v9M2 6.500h9" stroke="#222" stroke-width="1.200"/><path d="M6.500 0l2.200 2.800H4.300ZM6.500 13l2.200-2.800H4.300ZM0 6.500l2.800-2.200v4.400ZM13 6.500l-2.800-2.200v4.400Z" fill="#222"/></svg>
 <svg style="left:92.500px;top:55.500px" width="10" height="11" viewBox="0 0 11 12"><path d="M2.500 5.500V4a3 3 0 0 1 6 0v1.500" fill="none" stroke="#2a2a2a" stroke-width="1.900"/><rect x=".3" y="5" width="10.400" height="6.500" rx=".8" fill="#262626"/><path d="M1 7.500h9M1 9.500h9" stroke="#666" stroke-width=".5"/><rect x="5" y="7" width="1.200" height="2.500" fill="#888"/></svg>
 <span class="lbl dj" style="left:148.500px;top:54px">Fill:</span>
 <div class="fld" style="left:166px;top:52px"></div><div class="fbtn" style="left:199px;top:52px"></div>
 <span class="lbl dj" style="left:171px;top:55px;font-size:9.200px">100%</span>
 <div class="abs" style="left:3px;top:73px;width:209px;height:1px;background:#8e8e8e"></div>
 <!-- scrollbar track -->
 <div class="abs" style="left:197px;top:74px;width:15px;height:352px;background:linear-gradient(to right,#d6d6d6,#f3f3f3 55%,#fff)"></div>
 <!-- eye column line -->
 <div class="abs" style="left:25px;top:74px;width:1px;height:352px;background:#a4a4a4"></div>
<div class="lrow" style="top:74px"><svg style="left:3px;top:11px" width="16" height="16" viewBox="0 0 16 16"><rect x=".5" y=".5" width="15" height="15" fill="#d9d9d9" stroke="#bcbcbc"/><path d="M1.800 8.300C4.300 4.300 11 3.800 14.300 8.300 11.500 11.800 4.800 12 1.800 8.300Z" fill="#f2f2f2" stroke="#2e2e2e" stroke-width=".9"/><circle cx="8" cy="8" r="2.700" fill="#2b2b2b"/><circle cx="7.200" cy="7.200" r=".8" fill="#bdbdbd"/><path d="M1.500 6.800C4.500 3 11.500 3 14.500 6.800" fill="none" stroke="#2e2e2e" stroke-width="1.200"/></svg><div class="th fill"><div class="sl"></div><svg style="left:12px;top:25px" width="5" height="3" viewBox="0 0 5 3"><path d="M0 3L2.500 .3 5 3Z" fill="#fff" stroke="#111" stroke-width=".8"/></svg></div><svg style="left:60.500px;top:13px" width="8" height="13" viewBox="0 0 8 13"><rect x="1.200" y=".7" width="5.600" height="7" rx="2.500" fill="#f4f4f4" stroke="#3a3a3a" stroke-width="1.100"/><rect x="1.200" y="5.300" width="5.600" height="7" rx="2.500" fill="none" stroke="#3a3a3a" stroke-width="1.100"/><path d="M4 3.200v6.600" stroke="#3a3a3a" stroke-width="1.200"/></svg><div class="th mask"><i style="left:0;top:25.7px;width:30px;height:4px"></i></div><span class="ln">Shape 1 copy 7</span></div>
<div class="lrow" style="top:113px"><svg style="left:3px;top:11px" width="16" height="16" viewBox="0 0 16 16"><rect x=".5" y=".5" width="15" height="15" fill="#d9d9d9" stroke="#bcbcbc"/><path d="M1.800 8.300C4.300 4.300 11 3.800 14.300 8.300 11.500 11.800 4.800 12 1.800 8.300Z" fill="#f2f2f2" stroke="#2e2e2e" stroke-width=".9"/><circle cx="8" cy="8" r="2.700" fill="#2b2b2b"/><circle cx="7.200" cy="7.200" r=".8" fill="#bdbdbd"/><path d="M1.500 6.800C4.500 3 11.500 3 14.500 6.800" fill="none" stroke="#2e2e2e" stroke-width="1.200"/></svg><div class="th fill"><div class="sl"></div><svg style="left:12px;top:25px" width="5" height="3" viewBox="0 0 5 3"><path d="M0 3L2.500 .3 5 3Z" fill="#fff" stroke="#111" stroke-width=".8"/></svg></div><svg style="left:60.500px;top:13px" width="8" height="13" viewBox="0 0 8 13"><rect x="1.200" y=".7" width="5.600" height="7" rx="2.500" fill="#f4f4f4" stroke="#3a3a3a" stroke-width="1.100"/><rect x="1.200" y="5.300" width="5.600" height="7" rx="2.500" fill="none" stroke="#3a3a3a" stroke-width="1.100"/><path d="M4 3.200v6.600" stroke="#3a3a3a" stroke-width="1.200"/></svg><div class="th mask"><i style="left:0;top:18.3px;width:30px;height:4px"></i></div><span class="ln">Shape 1 copy 6</span></div>
<div class="lrow sel" style="top:152px"><svg style="left:3px;top:11px" width="16" height="16" viewBox="0 0 16 16"><rect x=".5" y=".5" width="15" height="15" fill="#d9d9d9" stroke="#bcbcbc"/><path d="M1.800 8.300C4.300 4.300 11 3.800 14.300 8.300 11.500 11.800 4.800 12 1.800 8.300Z" fill="#f2f2f2" stroke="#2e2e2e" stroke-width=".9"/><circle cx="8" cy="8" r="2.700" fill="#2b2b2b"/><circle cx="7.200" cy="7.200" r=".8" fill="#bdbdbd"/><path d="M1.500 6.800C4.500 3 11.500 3 14.500 6.800" fill="none" stroke="#2e2e2e" stroke-width="1.200"/></svg><div class="th fill"><div class="sl"></div><svg style="left:12px;top:25px" width="5" height="3" viewBox="0 0 5 3"><path d="M0 3L2.500 .3 5 3Z" fill="#fff" stroke="#111" stroke-width=".8"/></svg></div><svg style="left:60.500px;top:13px" width="8" height="13" viewBox="0 0 8 13"><rect x="1.200" y=".7" width="5.600" height="7" rx="2.500" fill="#f4f4f4" stroke="#3a3a3a" stroke-width="1.100"/><rect x="1.200" y="5.300" width="5.600" height="7" rx="2.500" fill="none" stroke="#3a3a3a" stroke-width="1.100"/><path d="M4 3.200v6.600" stroke="#3a3a3a" stroke-width="1.200"/></svg><div class="th mask"><i style="left:0;top:10.7px;width:30px;height:4px"></i></div><span class="ln">Shape 1 copy 5</span></div>
<div class="lrow" style="top:191px"><svg style="left:3px;top:11px" width="16" height="16" viewBox="0 0 16 16"><rect x=".5" y=".5" width="15" height="15" fill="#d9d9d9" stroke="#bcbcbc"/><path d="M1.800 8.300C4.300 4.300 11 3.800 14.300 8.300 11.500 11.800 4.800 12 1.800 8.300Z" fill="#f2f2f2" stroke="#2e2e2e" stroke-width=".9"/><circle cx="8" cy="8" r="2.700" fill="#2b2b2b"/><circle cx="7.200" cy="7.200" r=".8" fill="#bdbdbd"/><path d="M1.500 6.800C4.500 3 11.500 3 14.500 6.800" fill="none" stroke="#2e2e2e" stroke-width="1.200"/></svg><div class="th fill"><div class="sl"></div><svg style="left:12px;top:25px" width="5" height="3" viewBox="0 0 5 3"><path d="M0 3L2.500 .3 5 3Z" fill="#fff" stroke="#111" stroke-width=".8"/></svg></div><svg style="left:60.500px;top:13px" width="8" height="13" viewBox="0 0 8 13"><rect x="1.200" y=".7" width="5.600" height="7" rx="2.500" fill="#f4f4f4" stroke="#3a3a3a" stroke-width="1.100"/><rect x="1.200" y="5.300" width="5.600" height="7" rx="2.500" fill="none" stroke="#3a3a3a" stroke-width="1.100"/><path d="M4 3.200v6.600" stroke="#3a3a3a" stroke-width="1.200"/></svg><div class="th mask"><i style="left:0;top:3.3px;width:30px;height:4px"></i></div><span class="ln">Shape 1 copy 4</span></div>
<div class="lrow" style="top:230px"><svg style="left:3px;top:11px" width="16" height="16" viewBox="0 0 16 16"><rect x=".5" y=".5" width="15" height="15" fill="#d9d9d9" stroke="#bcbcbc"/><path d="M1.800 8.300C4.300 4.300 11 3.800 14.300 8.300 11.500 11.800 4.800 12 1.800 8.300Z" fill="#f2f2f2" stroke="#2e2e2e" stroke-width=".9"/><circle cx="8" cy="8" r="2.700" fill="#2b2b2b"/><circle cx="7.200" cy="7.200" r=".8" fill="#bdbdbd"/><path d="M1.500 6.800C4.500 3 11.500 3 14.500 6.800" fill="none" stroke="#2e2e2e" stroke-width="1.200"/></svg><div class="th fill"><div class="sl"></div><svg style="left:12px;top:25px" width="5" height="3" viewBox="0 0 5 3"><path d="M0 3L2.500 .3 5 3Z" fill="#fff" stroke="#111" stroke-width=".8"/></svg></div><svg style="left:60.500px;top:13px" width="8" height="13" viewBox="0 0 8 13"><rect x="1.200" y=".7" width="5.600" height="7" rx="2.500" fill="#f4f4f4" stroke="#3a3a3a" stroke-width="1.100"/><rect x="1.200" y="5.300" width="5.600" height="7" rx="2.500" fill="none" stroke="#3a3a3a" stroke-width="1.100"/><path d="M4 3.200v6.600" stroke="#3a3a3a" stroke-width="1.200"/></svg><div class="th mask"><i style="left:25.7px;top:0;width:4px;height:30px"></i></div><span class="ln">Shape 1 copy 3</span></div>
<div class="lrow" style="top:269px"><svg style="left:3px;top:11px" width="16" height="16" viewBox="0 0 16 16"><rect x=".5" y=".5" width="15" height="15" fill="#d9d9d9" stroke="#bcbcbc"/><path d="M1.800 8.300C4.300 4.300 11 3.800 14.300 8.300 11.500 11.800 4.800 12 1.800 8.300Z" fill="#f2f2f2" stroke="#2e2e2e" stroke-width=".9"/><circle cx="8" cy="8" r="2.700" fill="#2b2b2b"/><circle cx="7.200" cy="7.200" r=".8" fill="#bdbdbd"/><path d="M1.500 6.800C4.500 3 11.500 3 14.500 6.800" fill="none" stroke="#2e2e2e" stroke-width="1.200"/></svg><div class="th fill"><div class="sl"></div><svg style="left:12px;top:25px" width="5" height="3" viewBox="0 0 5 3"><path d="M0 3L2.500 .3 5 3Z" fill="#fff" stroke="#111" stroke-width=".8"/></svg></div><svg style="left:60.500px;top:13px" width="8" height="13" viewBox="0 0 8 13"><rect x="1.200" y=".7" width="5.600" height="7" rx="2.500" fill="#f4f4f4" stroke="#3a3a3a" stroke-width="1.100"/><rect x="1.200" y="5.300" width="5.600" height="7" rx="2.500" fill="none" stroke="#3a3a3a" stroke-width="1.100"/><path d="M4 3.200v6.600" stroke="#3a3a3a" stroke-width="1.200"/></svg><div class="th mask"><i style="left:18.2px;top:0;width:4px;height:30px"></i></div><span class="ln">Shape 1 copy 2</span></div>
<div class="lrow" style="top:308px"><svg style="left:3px;top:11px" width="16" height="16" viewBox="0 0 16 16"><rect x=".5" y=".5" width="15" height="15" fill="#d9d9d9" stroke="#bcbcbc"/><path d="M1.800 8.300C4.300 4.300 11 3.800 14.300 8.300 11.500 11.800 4.800 12 1.800 8.300Z" fill="#f2f2f2" stroke="#2e2e2e" stroke-width=".9"/><circle cx="8" cy="8" r="2.700" fill="#2b2b2b"/><circle cx="7.200" cy="7.200" r=".8" fill="#bdbdbd"/><path d="M1.500 6.800C4.500 3 11.500 3 14.500 6.800" fill="none" stroke="#2e2e2e" stroke-width="1.200"/></svg><div class="th fill"><div class="sl"></div><svg style="left:12px;top:25px" width="5" height="3" viewBox="0 0 5 3"><path d="M0 3L2.500 .3 5 3Z" fill="#fff" stroke="#111" stroke-width=".8"/></svg></div><svg style="left:60.500px;top:13px" width="8" height="13" viewBox="0 0 8 13"><rect x="1.200" y=".7" width="5.600" height="7" rx="2.500" fill="#f4f4f4" stroke="#3a3a3a" stroke-width="1.100"/><rect x="1.200" y="5.300" width="5.600" height="7" rx="2.500" fill="none" stroke="#3a3a3a" stroke-width="1.100"/><path d="M4 3.200v6.600" stroke="#3a3a3a" stroke-width="1.200"/></svg><div class="th mask"><i style="left:10.4px;top:0;width:4px;height:30px"></i></div><span class="ln">Shape 1 copy</span></div>
<div class="lrow" style="top:347px"><svg style="left:3px;top:11px" width="16" height="16" viewBox="0 0 16 16"><rect x=".5" y=".5" width="15" height="15" fill="#d9d9d9" stroke="#bcbcbc"/><path d="M1.800 8.300C4.300 4.300 11 3.800 14.300 8.300 11.500 11.800 4.800 12 1.800 8.300Z" fill="#f2f2f2" stroke="#2e2e2e" stroke-width=".9"/><circle cx="8" cy="8" r="2.700" fill="#2b2b2b"/><circle cx="7.200" cy="7.200" r=".8" fill="#bdbdbd"/><path d="M1.500 6.800C4.500 3 11.500 3 14.500 6.800" fill="none" stroke="#2e2e2e" stroke-width="1.200"/></svg><div class="th fill"><div class="sl"></div><svg style="left:12px;top:25px" width="5" height="3" viewBox="0 0 5 3"><path d="M0 3L2.500 .3 5 3Z" fill="#fff" stroke="#111" stroke-width=".8"/></svg></div><svg style="left:60.500px;top:13px" width="8" height="13" viewBox="0 0 8 13"><rect x="1.200" y=".7" width="5.600" height="7" rx="2.500" fill="#f4f4f4" stroke="#3a3a3a" stroke-width="1.100"/><rect x="1.200" y="5.300" width="5.600" height="7" rx="2.500" fill="none" stroke="#3a3a3a" stroke-width="1.100"/><path d="M4 3.200v6.600" stroke="#3a3a3a" stroke-width="1.200"/></svg><div class="th mask"><i style="left:2.7px;top:0;width:4px;height:30px"></i></div><span class="ln">Shape 1</span></div>
<div class="lrow" style="top:386px"><svg style="left:3px;top:11px" width="16" height="16" viewBox="0 0 16 16"><rect x=".5" y=".5" width="15" height="15" fill="#d9d9d9" stroke="#bcbcbc"/><path d="M1.800 8.300C4.300 4.300 11 3.800 14.300 8.300 11.500 11.800 4.800 12 1.800 8.300Z" fill="#f2f2f2" stroke="#2e2e2e" stroke-width=".9"/><circle cx="8" cy="8" r="2.700" fill="#2b2b2b"/><circle cx="7.200" cy="7.200" r=".8" fill="#bdbdbd"/><path d="M1.500 6.800C4.500 3 11.500 3 14.500 6.800" fill="none" stroke="#2e2e2e" stroke-width="1.200"/></svg><div class="th" style="background:#fff"></div><span class="ln" style="left:67px;font-style:italic">Background</span><svg style="left:169px;top:13px" width="10" height="11" viewBox="0 0 10 11"><path d="M2.500 5V3.500a2.500 2.500 0 0 1 5 0V5" fill="none" stroke="#333" stroke-width="1.300"/><rect x=".5" y="4.500" width="9" height="6" rx=".8" fill="#f2f2f2" stroke="#333"/><path d="M5 6.500v2" stroke="#333"/></svg></div>

 <!-- bottom bar -->
 <div class="abs" style="left:3px;top:428px;width:209px;height:1px;background:#a0a0a0"></div>
 <svg style="left:11px;top:433px" width="20" height="8" viewBox="0 0 20 8"><rect x=".7" y=".7" width="10.500" height="6" rx="3" fill="none" stroke="#555" stroke-width="1.200"/><rect x="8" y=".7" width="10.500" height="6" rx="3" fill="none" stroke="#555" stroke-width="1.200"/><path d="M5 3.700h9.500" stroke="#555" stroke-width="1.200"/></svg>
 <span class="abs" style="left:42px;top:428.500px;font-family:'Liberation Serif',serif;font-style:italic;font-weight:bold;font-size:14.500px;line-height:16px;color:#333;letter-spacing:.2px">fx</span>
 <svg style="left:56px;top:441px" width="4" height="3" viewBox="0 0 4 3"><path d="M0 0h3.600L1.800 2.400Z" fill="#222"/></svg>
 <svg style="left:69px;top:431px" width="15" height="12" viewBox="0 0 15 12"><rect x=".5" y=".5" width="13.500" height="11" fill="#9f9f9f" stroke="#3a3a3a"/><circle cx="7.200" cy="6" r="3.300" fill="#fff" stroke="#444" stroke-width=".5"/></svg>
 <svg style="left:97px;top:431px" width="16" height="13" viewBox="0 0 16 13"><circle cx="6.500" cy="6.500" r="5.500" fill="#f6f6f6" stroke="#3a3a3a" stroke-width="1.200"/><path d="M2.600 10.400A5.500 5.500 0 0 1 10.400 2.600Z" fill="#2e2e2e"/><path d="M12.200 10.500h3.600L14 12.900Z" fill="#222"/></svg>
 <svg style="left:124.500px;top:432.500px" width="11" height="9" viewBox="0 0 12 10.500"><defs><linearGradient id="fdg" x1="0" y1="0" x2="1" y2="1"><stop offset="0" stop-color="#fff"/><stop offset="1" stop-color="#bdbdbd"/></linearGradient></defs><path d="M.5 9.500V.5H4l1 1.300h6.500V9.500Z" fill="url(#fdg)" stroke="#5a5a5a" stroke-width=".9"/></svg>
 <svg style="left:152px;top:432px" width="10" height="10" viewBox="0 0 10 10"><rect x=".5" y=".5" width="9" height="8.500" fill="url(#fdg)" stroke="#4a4a4a" stroke-width=".9"/><path d="M.5 4.500h4.500v4.500" fill="none" stroke="#222" stroke-width="1"/><path d="M1 9.500h8.500" stroke="#222" stroke-width=".8"/><rect x="1.500" y="5.500" width="2.800" height="2.800" fill="#555"/></svg>
 <svg style="left:180px;top:431.500px" width="9" height="11" viewBox="0 0 11 14"><path d="M1.500 4.500h8l-.8 8.500h-6.400Z" fill="#e8e8e8" stroke="#2e2e2e" stroke-width="1.200"/><path d="M3.800 6v5.500M5.500 6v5.500M7.200 6v5.500" stroke="#444" stroke-width="1"/><rect x=".5" y="2.300" width="10" height="2.400" rx=".6" fill="#3a3a3a" stroke="#2e2e2e" stroke-width=".9"/><path d="M3.500 2.300c0-2.300 4-2.300 4 0" fill="none" stroke="#2e2e2e" stroke-width="1.200"/></svg>
 <div class="abs" style="left:202px;top:436px;width:10px;height:10px;background:conic-gradient(#9a9a9a 25%,rgba(0,0,0,0) 0) 0 0/2px 2px;clip-path:polygon(100% 0,100% 100%,0 100%)"></div>
</div>

</body>
</html>
